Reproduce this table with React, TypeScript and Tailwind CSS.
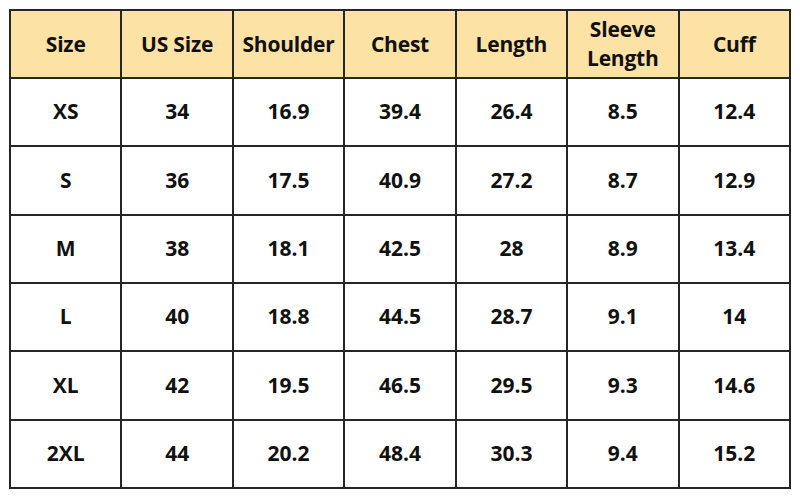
const headers = ["Size", "US Size", "Shoulder", "Chest", "Length", "Sleeve Length", "Cuff"];

const rows = [
  ["XS", "34", "16.9", "39.4", "26.4", "8.5", "12.4"],
  ["S", "36", "17.5", "40.9", "27.2", "8.7", "12.9"],
  ["M", "38", "18.1", "42.5", "28", "8.9", "13.4"],
  ["L", "40", "18.8", "44.5", "28.7", "9.1", "14"],
  ["XL", "42", "19.5", "46.5", "29.5", "9.3", "14.6"],
  ["2XL", "44", "20.2", "48.4", "30.3", "9.4", "15.2"],
];

export default function App() {
  return (
    <main
      className="h-[500px] w-[800px] bg-white px-[9px] pt-[9px] text-[#111]"
      style={{ fontFamily: '"Open Sans", "Noto Sans", sans-serif' }}
    >
      <table className="h-[480px] w-[782px] table-fixed border-collapse border-2 border-[#262626]">
        <thead>
          <tr className="h-[68px] bg-[#fde2a6]">
            {headers.map((h) => (
              <th
                key={h}
                className="border-2 border-[#262626] px-0 text-center text-[21px] font-bold leading-[29px] tracking-[-0.2px]"
              >
                {h === "Sleeve Length" ? (
                  <>
                    Sleeve
                    <br />
                    Length
                  </>
                ) : (
                  h
                )}
              </th>
            ))}
          </tr>
        </thead>
        <tbody>
          {rows.map((row) => (
            <tr key={row[0]} className="h-[68px]">
              {row.map((cell, i) => (
                <td
                  key={i}
                  className="border-2 border-[#262626] text-center text-[21px] font-bold"
                >
                  {cell}
                </td>
              ))}
            </tr>
          ))}
        </tbody>
      </table>
    </main>
  );
}
